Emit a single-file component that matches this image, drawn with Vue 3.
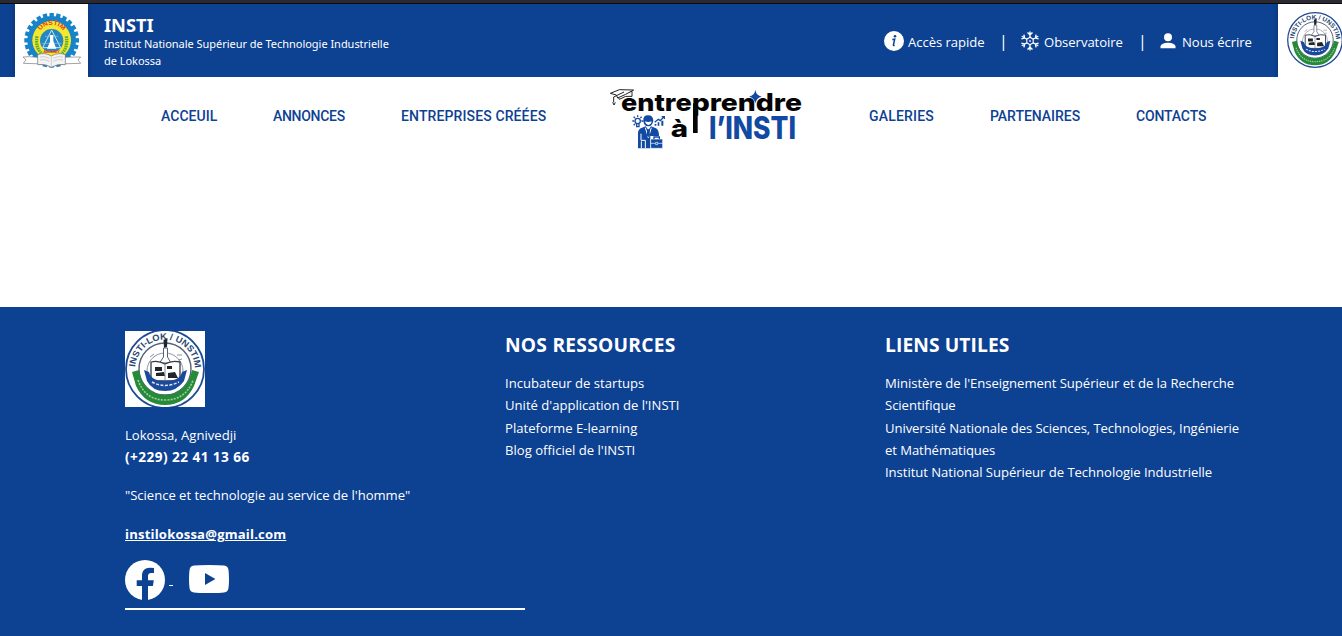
<script setup>
const menuLeft = [
  { label: 'ACCEUIL', cls: 'c1' },
  { label: 'ANNONCES', cls: 'c2' },
  { label: 'ENTREPRISES CRÉÉES', cls: 'c3' },
]
const menuRight = [
  { label: 'GALERIES', cls: 'c5' },
  { label: 'PARTENAIRES', cls: 'c6' },
  { label: 'CONTACTS', cls: 'c7' },
]
const resources = [
  'Incubateur de startups',
  "Unité d'application de l'INSTI",
  'Plateforme E-learning',
  "Blog officiel de l'INSTI",
]
const teeth = Array.from({ length: 24 }, (_, i) => (i * 360) / 24)
</script>

<template>
  <div class="page">
    <svg class="defs" aria-hidden="true">
      <symbol id="seal" viewBox="0 0 80 80">
        <circle cx="40" cy="40" r="39" fill="#fff" stroke="#1c4a94" stroke-width="1.8" />
        <circle cx="40" cy="40" r="26" fill="#fff" stroke="#53617a" stroke-width="1.4" />
        <circle cx="40" cy="42" r="18" fill="none" stroke="#8b949e" stroke-width="1" />
        <path id="sealArc" d="M10.5 46 A30 30 0 1 1 69.500 46" fill="none" />
        <text class="sealtext"><textPath href="#sealArc" startOffset="8" textLength="90" lengthAdjust="spacingAndGlyphs">INSTI-LOK / UNSTIM</textPath></text>
        <path d="M38.5 11 L42.5 9 L42 18 L39 19Z" fill="#20262c" />
        <path d="M38.5 19 H42.5 V28 L46 34 H34.5 L38.5 28Z" fill="#fff" stroke="#53617a" />
        <path d="M26 33 Q33 31 40 35 Q47 31 55 33 V52 H26Z" fill="#fff" stroke="#333c45" stroke-width="1.3" />
        <path d="M30 38h7v4h-7zM31 44l8-1 1 4h-9zM42 37h5v3h-5zM43 44l7-1 3 6h-10z" fill="#20262c" />
        <path d="M40 35V52" stroke="#66717d" stroke-width=".8" />
        <path d="M25 28l4-3M52 26h5M57 30l-4 1" stroke="#8b949e" />
        <path d="M19 41 L24 43 Q26 52 40 52 Q55 52 57 43 L62 41 L59 52 Q52 62 40 62 Q27 62 22 52Z" fill="#1b4a9c" />
        <path d="M27 53 Q40 60 54 53" fill="none" stroke="#dce6f6" stroke-width="1.5" stroke-dasharray="3 1.5" />
        <path d="M7 43 L14 41 Q18 65 40 66 Q62 65 67 41 L74 43 L69 57 Q60 76 40 76 Q20 76 11 57Z" fill="#278a3a" />
        <path d="M13 51 Q20 71 40 71 Q61 71 68 51" fill="none" stroke="#9ad19b" stroke-width="1.6" stroke-dasharray="2 1.2" />
      </symbol>
    </svg>

    <div class="strip"></div>
    <header class="topbar">
      <div class="logo-box">
        <svg width="60" height="56" viewBox="0 0 180 168">
          <g transform="translate(89 82)">
            <rect v-for="t in teeth" :key="t" x="-6.5" y="-82" width="13" height="18" fill="#1783c8" :transform="`rotate(${t})`" />
            <circle r="73" fill="#1783c8" />
            <circle r="58" fill="#f5e72c" />
            <path d="M-44 -12 Q-50 22 -28 42M44 -12 Q50 22 28 42" fill="none" stroke="#5fae3c" stroke-width="10" stroke-dasharray="5 2" />
            <circle r="35" cy="1" fill="#2387c6" />
            <path d="M0 -31 L27 22 H-27Z" fill="none" stroke="#c8e6f5" stroke-width="3" />
            <path d="M-20 -12H20M-30 9H30" stroke="#86c3e4" stroke-width="2" />
            <path d="M-5 -16H5V2L14 25H-14L-5 4Z" fill="#fff" />
            <path id="uArc" d="M-41 -6 A41 41 0 0 1 41 -6" fill="none" />
            <text class="unstim"><textPath href="#uArc" startOffset="24" textLength="80" lengthAdjust="spacingAndGlyphs">UNSTIM</textPath></text>
            <text class="abomey" x="-25" y="39" textLength="50">ABOMEY</text>
          </g>
          <path d="M3 132 Q40 128 88 142 Q135 128 176 132 L168 141 L176 151 Q130 149 88 160 Q46 149 4 151 L12 141Z" fill="#fff" stroke="#777" stroke-width="2" />
          <path d="M47 125 Q68 117 88 129 Q109 117 130 125 V155 Q108 150 88 163 Q68 150 47 155Z" fill="#f3f3f3" stroke="#707070" stroke-width="2" />
          <path d="M88 129V162M54 132 Q70 128 82 136M94 136 Q108 128 123 132M54 141 Q70 137 82 145M94 145 Q108 137 123 141" fill="none" stroke="#bbb" stroke-width="2" />
        </svg>
      </div>
      <div class="brand">
        <strong>INSTI</strong>
        <span>Institut Nationale Supérieur de Technologie Industrielle</span>
        <span class="town">de Lokossa</span>
      </div>
      <div class="quick">
        <svg width="20" height="20" viewBox="0 0 20 20">
          <circle cx="10" cy="10" r="10" fill="#fff" />
          <circle cx="11" cy="5.2" r="1.3" fill="#0d4192" />
          <path d="M8.300 8.500 L10.700 8.200 L9.400 13.800 Q9.300 14.900 10.600 14.300" fill="none" stroke="#0d4192" stroke-width="1.5" />
        </svg>
        <span class="q1">Accès rapide</span>
        <i>|</i>
        <svg class="snow" width="20" height="20" viewBox="0 0 20 20" fill="none" stroke="#fff" stroke-width="1.4">
          <g v-for="a in [0, 60, 120, 180, 240, 300]" :key="a" :transform="`rotate(${a} 10 10)`">
            <path d="M10 6.500V.5M7.500 1.500L10 3.800L12.500 1.500" />
          </g>
          <path d="M10 6.300L13.200 8.150V11.850L10 13.700L6.800 11.850V8.150Z" stroke-width="1.100" />
          <circle cx="10" cy="10" r=".5" stroke-width="1" />
        </svg>
        <span class="q2">Observatoire</span>
        <i>|</i>
        <svg class="user" width="16" height="16" viewBox="0 0 16 16" fill="#fff">
          <circle cx="8" cy="4.2" r="4" />
          <path d="M.5 15.2V13.5C.5 11 4.5 9.7 8 9.7S15.500 11 15.500 13.500V15.200Z" />
        </svg>
        <span class="q3">Nous écrire</span>
      </div>
      <div class="seal-box"><svg width="56" height="56"><use href="#seal" /></svg></div>
    </header>

    <nav class="menu">
      <a v-for="m in menuLeft" :key="m.label" :class="m.cls">{{ m.label }}</a>
      <svg class="wordmark" width="214" height="76" viewBox="0 0 642 228">
        <text class="wm black" y="92"><tspan x="63" textLength="212" lengthAdjust="spacingAndGlyphs">entre</tspan><tspan x="275" textLength="331" lengthAdjust="spacingAndGlyphs">prendre</tspan></text>
        <path d="M279 70H293V159H279Z" fill="#050505" />
        <text class="wm black" x="212" y="172" textLength="52" lengthAdjust="spacingAndGlyphs">à</text>
        <text class="wm blue" x="327" y="177" textLength="261" lengthAdjust="spacingAndGlyphs">l’INSTI</text>
        <path d="M466 30Q469 47 485 50Q469 53 466 70Q463 53 447 50Q463 47 466 30Z" fill="#1249a2" />
        <g fill="#fff" stroke="#222" stroke-width="3" stroke-linejoin="round">
          <path d="M51 43L58 58Q77 45 96 49V34Z" />
          <path d="M31 40L58 29L101 30L77 43L53 54L49 45Z" />
          <path d="M72 36L41 51V67M38 67L42 75L46 67" fill="none" />
        </g>
        <g fill="none" stroke="#1249a2" stroke-width="4">
          <circle cx="113" cy="123" r="8" />
          <path d="M110 132V140H117V132M113 106V111M97 123H102M124 123H130M101 110L105 114M125 110L121 114M101 136L105 132" />
          <path d="M164 127L175 118L181 122L192 110M185 110H193V117" />
        </g>
        <path d="M164 137V132H169V137ZM173 137V127H178V137ZM184 137V122H190V137Z" fill="#1249a2" />
        <path d="M130 123Q128 106 144 106Q160 106 160 123L157 131Q153 139 145 139Q136 139 132 131Z" fill="#1249a2" />
        <path d="M135 124Q144 128 155 124Q154 134 145 135Q137 134 135 124Z" fill="#fff" />
        <path d="M114 205V159Q114 147 126 143L137 139L145 150L153 139L168 145Q177 150 177 168H151V205Z" fill="#1249a2" />
        <path d="M136 143L145 173L154 143M123 161V181H136V205M124 184V205" fill="none" stroke="#fff" stroke-width="3" />
        <path d="M142 148H148L150 165L145 172L140 165Z" fill="#1249a2" />
        <path d="M152 177H188V205H152Z" fill="#1249a2" stroke="#fff" stroke-width="2" />
        <path d="M162 177V171H178V177" fill="none" stroke="#1249a2" stroke-width="4" />
        <path d="M152 190H166M174 190H188M167 187H173V194H167Z" stroke="#fff" stroke-width="2" fill="none" />
      </svg>
      <a v-for="m in menuRight" :key="m.label" :class="m.cls">{{ m.label }}</a>
    </nav>

    <footer class="foot">
      <section class="contact">
        <div class="foot-seal"><svg width="80" height="80"><use href="#seal" /></svg></div>
        <p class="addr"><span class="ad1">Lokossa, Agnivedji</span><br /><b>(+229) 22 41 13 66</b></p>
        <p class="motto">"Science et technologie au service de l'homme"</p>
        <p class="mail"><a>instilokossa@gmail.com</a></p>
        <div class="social">
          <svg width="40" height="40" viewBox="0 0 40 40">
            <circle cx="20" cy="20" r="20" fill="#fff" />
            <path d="M17 40V26H11.700V20.300H17V15.700C17 10.500 20 7.700 24.800 7.700Q27 7.700 29 8.100V13H26.300C23.700 13 23 14.500 23 16.200V20.300H28.800L27.900 26H23V40Z" fill="#0d4192" />
          </svg>
          <i class="dash"></i>
          <svg class="yt" width="40" height="28" viewBox="0 0 40 28">
            <path d="M20 0Q31 0 35 .6Q39 1 39.500 5Q40 9 40 14T39.500 23Q39 27 35 27.500Q31 28 20 28T5 27.500Q1 27 .5 23Q0 19 0 14T.5 5Q1 1 5 .6Q9 0 20 0Z" fill="#fff" />
            <path d="M16 8L26.400 14L16 20Z" fill="#0d4192" />
          </svg>
        </div>
        <div class="rule"></div>
      </section>
      <section>
        <h2 class="h-res">NOS RESSOURCES</h2>
        <ul><li v-for="r in resources" :key="r">{{ r }}</li></ul>
      </section>
      <section class="links">
        <h2 class="h-links">LIENS UTILES</h2>
        <ul>
          <li>Ministère de l'Enseignement Supérieur et de la Recherche<br />Scientifique</li>
          <li class="univ">Université Nationale des Sciences, Technologies, Ingénierie<br />et Mathématiques</li>
          <li>Institut National Supérieur de Technologie Industrielle</li>
        </ul>
      </section>
    </footer>
  </div>
</template>

<style>
body { margin: 0; overflow: hidden; }
</style>

<style scoped>
.page { width: 1342px; height: 636px; display: flex; flex-direction: column; overflow: hidden; background: #fff; font-family: "Open Sans", "Noto Sans", sans-serif; color: #fff; }
.page svg { display: block; flex: none; }
.page .defs { position: absolute; width: 0; height: 0; }
.strip { height: 3px; flex: none; background: #2b2a33; border-bottom: 1px solid #0c0c0d; }
.topbar { height: 73px; flex: none; display: flex; background: #0d4192; overflow: hidden; }
.logo-box { width: 73px; height: 73px; margin-left: 15px; background: #fff; box-sizing: border-box; padding: 9px 0 0 7px; box-shadow: 0 0 5px rgba(0, 0, 0, .3); flex: none; }
.brand { margin-left: 16px; width: 320px; padding-top: 11px; display: flex; flex-direction: column; font-family: "Noto Sans", sans-serif; font-size: 11px; line-height: 17px; white-space: nowrap; letter-spacing: -.03px; }
.brand strong { font-size: 18.300px; line-height: 20px; letter-spacing: 0; }
.quick { display: flex; align-items: center; margin-left: 460px; width: 394px; flex: none; font-size: 13.100px; letter-spacing: -.05px; white-space: nowrap; padding-top: 2px; height: 71px; }
.quick span { margin-left: 4px; }
.quick i { font-style: normal; font-size: 16px; width: 4px; text-align: center; margin: 0 16px 2px 15px; }
.quick svg { margin-bottom: 2px; }
.quick .snow { margin-left: 1px; }
.q1 { width: 76px; }
.q2 { width: 79px; }
.quick .user { margin-left: 2px; }
.quick .q3 { margin-left: 6px; }
.seal-box { width: 64px; height: 73px; flex: none; background: #fff; box-sizing: border-box; padding: 8px 0 0 9px; box-shadow: 0 0 5px rgba(0, 0, 0, .3); overflow: hidden; }
.sealtext { font: bold 9px "Liberation Sans", Arial, sans-serif; fill: #27466f; }
.unstim { font: bold 19px "Liberation Sans", Arial, sans-serif; fill: #e24427; }
.abomey { font: bold 13px "Liberation Sans", Arial, sans-serif; fill: #e24427; }

.menu { height: 230px; flex: none; display: grid; grid-template-columns: 112px 128px 199px 269px 121px 146px 1fr; padding-left: 161px; align-items: start; font-family: Roboto, sans-serif; font-weight: 500; font-size: 14px; line-height: 20px; color: #0d4192; white-space: nowrap; }
.menu a { margin-top: 29px; }
.c1 { letter-spacing: .05px; }
.c2 { letter-spacing: -.3px; }
.c3 { letter-spacing: .12px; }
.c5 { letter-spacing: .2px; }
.c6 { letter-spacing: -.03px; }
.c7 { letter-spacing: -.15px; }
.wordmark { margin-top: 3px; }
.wm { font-family: Inter, sans-serif; font-weight: 800; }
.black { font-size: 72px; fill: #050505; }
.blue { font-size: 92px; fill: #1249a2; }

.foot { flex: 1; display: grid; grid-template-columns: 380px 380px 380px; padding: 24px 0 0 125px; background: #0d4192; font-size: 13.100px; line-height: 22.300px; white-space: nowrap; }
.foot-seal { width: 80px; height: 76px; background: #fff; overflow: hidden; display: flex; align-items: center; }
.addr { margin: 17px 0 0; }
.addr b { font-size: 13.600px; letter-spacing: .45px; line-height: 20px; }
.motto { margin: 15px 0 0; letter-spacing: -.03px; }
.mail { margin: 17px 0 0; font-weight: 700; letter-spacing: .18px; }
.mail a { text-decoration: underline; }
.social { margin-top: 15px; height: 40px; display: flex; }
.dash { width: 4px; height: 1px; background: #fff; margin: 25px 16px 0 4px; }
.social .yt { margin-top: 5px; }
.rule { width: 400px; height: 2px; background: #fff; margin-top: 8px; }
.foot h2 { margin: 0 0 13px; font-size: 19.200px; line-height: 28px; font-weight: 700; letter-spacing: .25px; }
.foot .h-links { letter-spacing: .1px; }
.foot ul { margin: 0; padding: 0; list-style: none; }
.links ul { letter-spacing: -.045px; }
.links .univ { letter-spacing: -.08px; }
</style>
